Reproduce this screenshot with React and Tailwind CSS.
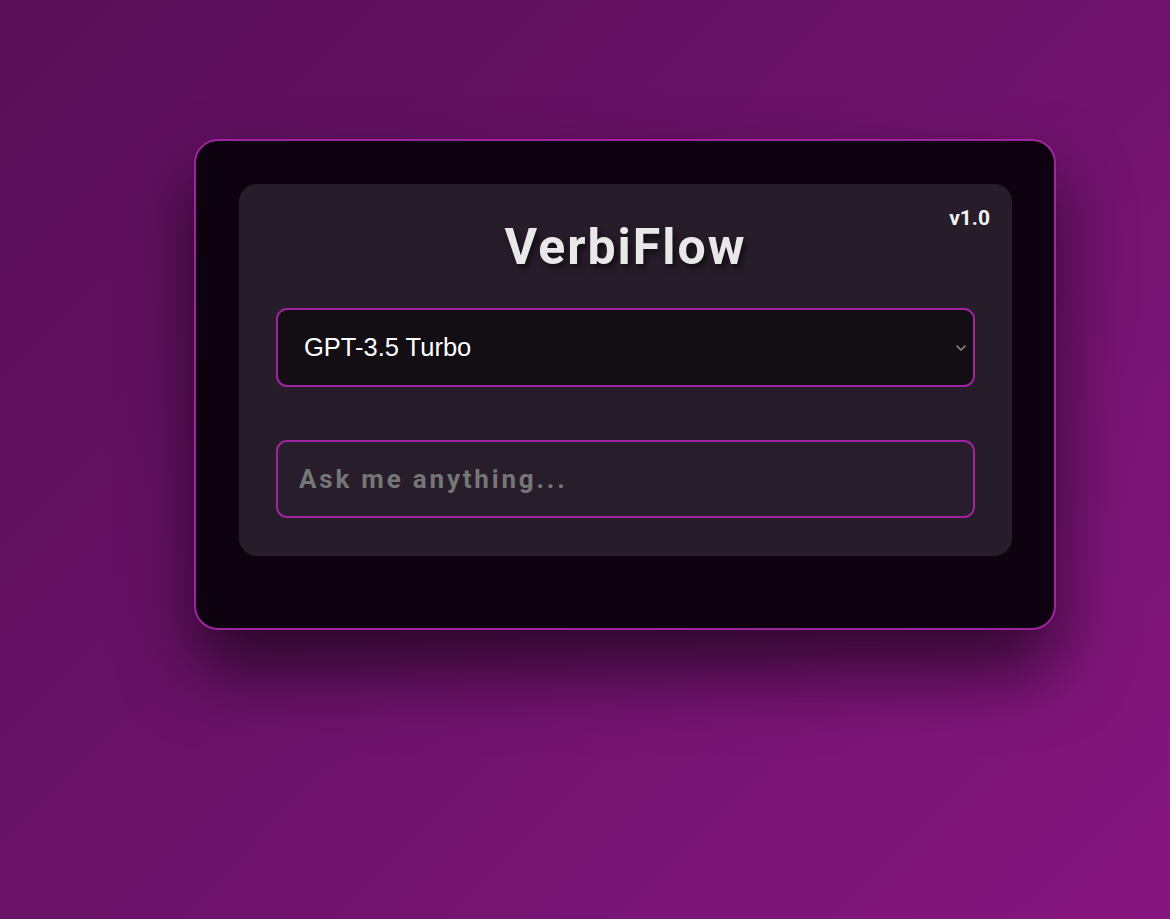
import React from "react";

export default function App() {
  return (
    <div className="min-h-screen w-full bg-[linear-gradient(135deg,#580f57_0%,#6a1268_45%,#86167f_100%)] pt-[139px] pl-[194px] overflow-hidden">
      <div className="w-[862px] rounded-[24px] border-2 border-[#a023a0] bg-[#0e0210] pt-[43px] px-[43px] pb-[72px] shadow-[0_40px_70px_rgba(0,0,0,0.6)]">
        <div className="relative w-[773px] rounded-[18px] bg-[#271d2a] px-[37px] pt-[33px] pb-[38px]">
          <span className="absolute top-[20px] right-[22px] text-[21px] leading-[28px] font-bold text-[#f2f2f2] [font-family:Roboto,'Liberation_Sans',sans-serif]">
            v1.0
          </span>
          <h1 className="pt-[2px] text-center text-[50px] leading-[56px] font-bold tracking-[2px] text-[#e8e8e8] [text-shadow:3px_4px_6px_rgba(0,0,0,0.6)] [font-family:Roboto,'Liberation_Sans',sans-serif]">
            VerbiFlow
          </h1>
          <div className="relative mt-[33px]">
            <select
              defaultValue="gpt35"
              className="block h-[79px] w-full appearance-none rounded-[11px] border-2 border-[#a023a0] bg-[#120e13] pl-[26px] text-[25.5px] text-white outline-none [font-family:'Liberation_Sans',Arial,sans-serif]"
            >
              <option value="gpt35">GPT-3.5 Turbo</option>
              <option value="gpt4">GPT-4</option>
            </select>
            <svg
              className="pointer-events-none absolute right-[8px] top-[36px]"
              width="12"
              height="8"
              viewBox="0 0 12 8"
              fill="none"
            >
              <path d="M2 2l4 4 4-4" stroke="#8a8a8a" strokeWidth="1.6" strokeLinecap="round" strokeLinejoin="round" />
            </svg>
          </div>
          <input
            type="text"
            placeholder="Ask me anything..."
            className="mt-[53px] block h-[78px] w-full rounded-[11px] border-2 border-[#a023a0] bg-[#271d2b] px-[21px] text-[26px] font-bold tracking-[2.8px] text-white outline-none placeholder:text-[#767676] [font-family:Roboto,'Liberation_Sans',sans-serif]"
          />
        </div>
      </div>
    </div>
  );
}
